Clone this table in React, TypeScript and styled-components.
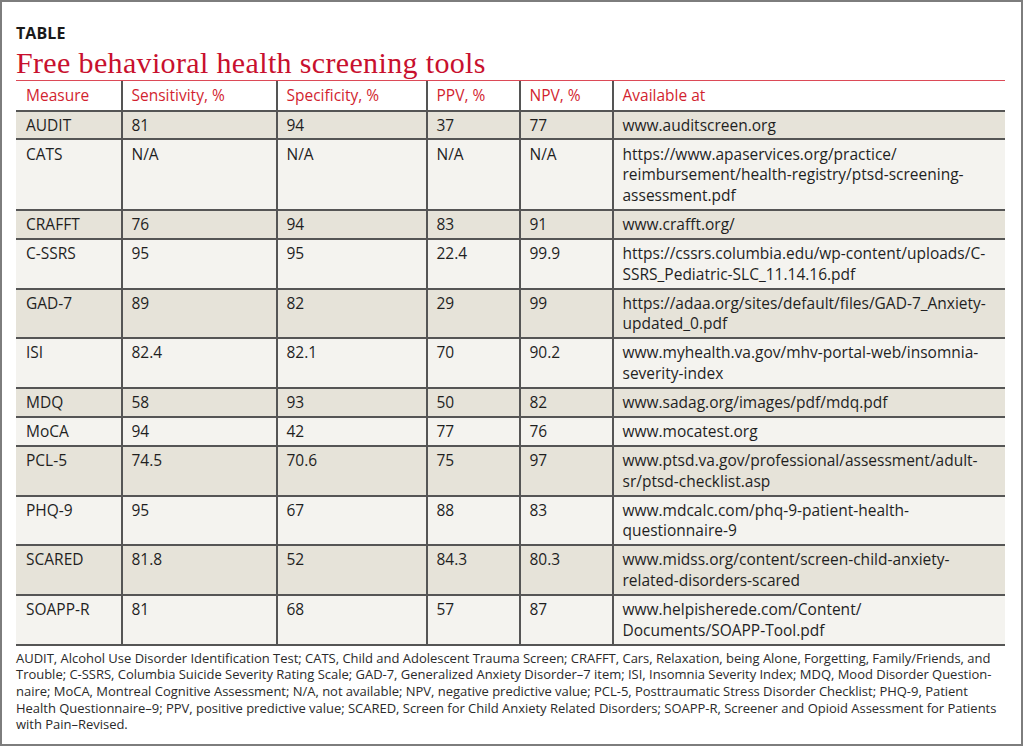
import React from "react";
import styled, { createGlobalStyle } from "styled-components";

const Global = createGlobalStyle`
  html, body { margin: 0; padding: 0; background: #ffffff; }
  body { font-family: "Open Sans", "Noto Sans", sans-serif; }
`;

const Frame = styled.div`
  box-sizing: border-box;
  width: 1023px;
  height: 746px;
  border: 2px solid #7d7d7d;
  padding: 20.5px 16px 0 14px;
  background: #ffffff;
  overflow: hidden;
`;

const Label = styled.div`
  font-family: "Open Sans", sans-serif;
  font-weight: 700;
  font-size: 16px;
  line-height: 20px;
  color: #1a1a1a;
  letter-spacing: 0.1px;
`;

const Title = styled.h1`
  margin: 3px 0 0;
  font-family: "Liberation Serif", "Times New Roman", serif;
  font-weight: 400;
  font-size: 30px;
  letter-spacing: 0.35px;
  line-height: 34px;
  color: #c8102e;
  border-bottom: 1.5px solid #dc4a57;
`;

const Table = styled.table`
  width: 989px;
  border-collapse: collapse;
  table-layout: fixed;
  font-family: "Open Sans", sans-serif;
  font-size: 15.5px;
  line-height: 20.7px;
  color: #1f1f1f;
`;

const HeadCell = styled.th<{ $first?: boolean }>`
  text-align: left;
  font-weight: 400;
  color: #d21f30;
  padding: 4px 6px 4.3px ${(p) => (p.$first ? "10px" : "8.5px")};
  border-left: ${(p) => (p.$first ? "none" : "2px solid #555555")};
  border-bottom: 2px solid #555555;
  background: #ffffff;
`;

const Row = styled.tr<{ $shade: boolean }>`
  background: ${(p) => (p.$shade ? "#e6e3d9" : "#f4f3ef")};
`;

const Cell = styled.td<{ $first?: boolean }>`
  vertical-align: top;
  padding: 3.1px 6px 3.2px ${(p) => (p.$first ? "10px" : "8.5px")};
  border-left: ${(p) => (p.$first ? "none" : "2px solid #555555")};
  border-bottom: 2px solid #555555;
  white-space: nowrap;
`;

const Line = styled.span`
  display: block;
`;

const Notes = styled.div`
  margin-top: 4px;
  font-family: "Open Sans", sans-serif;
  font-size: 13px;
  line-height: 16.7px;
  color: #2a2a2a;
  white-space: nowrap;
  letter-spacing: -0.02px;
`;

type Item = [string, string, string, string, string, string[]];

const rows: Item[] = [
  ["AUDIT", "81", "94", "37", "77", ["www.auditscreen.org"]],
  ["CATS", "N/A", "N/A", "N/A", "N/A", [
    "https://www.apaservices.org/practice/",
    "reimbursement/health-registry/ptsd-screening-",
    "assessment.pdf",
  ]],
  ["CRAFFT", "76", "94", "83", "91", ["www.crafft.org/"]],
  ["C-SSRS", "95", "95", "22.4", "99.9", [
    "https://cssrs.columbia.edu/wp-content/uploads/C-",
    "SSRS_Pediatric-SLC_11.14.16.pdf",
  ]],
  ["GAD-7", "89", "82", "29", "99", [
    "https://adaa.org/sites/default/files/GAD-7_Anxiety-",
    "updated_0.pdf",
  ]],
  ["ISI", "82.4", "82.1", "70", "90.2", [
    "www.myhealth.va.gov/mhv-portal-web/insomnia-",
    "severity-index",
  ]],
  ["MDQ", "58", "93", "50", "82", ["www.sadag.org/images/pdf/mdq.pdf"]],
  ["MoCA", "94", "42", "77", "76", ["www.mocatest.org"]],
  ["PCL-5", "74.5", "70.6", "75", "97", [
    "www.ptsd.va.gov/professional/assessment/adult-",
    "sr/ptsd-checklist.asp",
  ]],
  ["PHQ-9", "95", "67", "88", "83", [
    "www.mdcalc.com/phq-9-patient-health-",
    "questionnaire-9",
  ]],
  ["SCARED", "81.8", "52", "84.3", "80.3", [
    "www.midss.org/content/screen-child-anxiety-",
    "related-disorders-scared",
  ]],
  ["SOAPP-R", "81", "68", "57", "87", [
    "www.helpisherede.com/Content/",
    "Documents/SOAPP-Tool.pdf",
  ]],
];

const notes = [
  "AUDIT, Alcohol Use Disorder Identification Test; CATS, Child and Adolescent Trauma Screen; CRAFFT, Cars, Relaxation, being Alone, Forgetting, Family/Friends, and",
  "Trouble; C-SSRS, Columbia Suicide Severity Rating Scale; GAD-7, Generalized Anxiety Disorder\u20137 item; ISI, Insomnia Severity Index; MDQ, Mood Disorder Question-",
  "naire; MoCA, Montreal Cognitive Assessment; N/A, not available; NPV, negative predictive value; PCL-5, Posttraumatic Stress Disorder Checklist; PHQ-9, Patient",
  "Health Questionnaire\u20139; PPV, positive predictive value; SCARED, Screen for Child Anxiety Related Disorders; SOAPP-R, Screener and Opioid Assessment for Patients",
  "with Pain\u2013Revised.",
];

const widths = [106, 155, 150, 93, 93, 392];
const heads = ["Measure", "Sensitivity, %", "Specificity, %", "PPV, %", "NPV, %", "Available at"];

export default function App() {
  return (
    <>
      <Global />
      <Frame>
        <Label>TABLE</Label>
        <Title>Free behavioral health screening tools</Title>
        <Table>
          <colgroup>
            {widths.map((w, i) => (
              <col key={i} style={{ width: w }} />
            ))}
          </colgroup>
          <thead>
            <tr>
              {heads.map((h, i) => (
                <HeadCell key={h} $first={i === 0}>
                  {h}
                </HeadCell>
              ))}
            </tr>
          </thead>
          <tbody>
            {rows.map((r, idx) => (
              <Row key={r[0]} $shade={idx % 2 === 0}>
                <Cell $first>{r[0]}</Cell>
                <Cell>{r[1]}</Cell>
                <Cell>{r[2]}</Cell>
                <Cell>{r[3]}</Cell>
                <Cell>{r[4]}</Cell>
                <Cell>
                  {r[5].map((l) => (
                    <Line key={l}>{l}</Line>
                  ))}
                </Cell>
              </Row>
            ))}
          </tbody>
        </Table>
        <Notes>
          {notes.map((n) => (
            <Line key={n}>{n}</Line>
          ))}
        </Notes>
      </Frame>
    </>
  );
}
